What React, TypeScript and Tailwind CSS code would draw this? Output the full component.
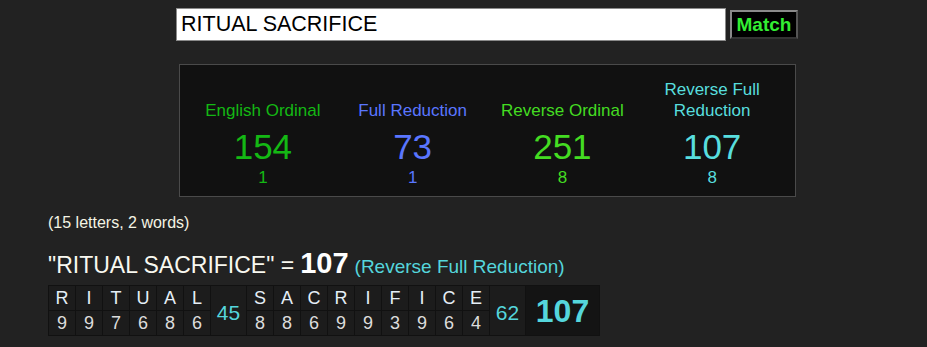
import React from 'react';

type Cipher = { name: React.ReactNode; value: number; reduced: number; color: string };

const CIPHERS: Cipher[] = [
  { name: 'English Ordinal', value: 154, reduced: 1, color: 'text-[#14b814]' },
  { name: 'Full Reduction', value: 73, reduced: 1, color: 'text-[#5a76ff]' },
  { name: 'Reverse Ordinal', value: 251, reduced: 8, color: 'text-[#44dc22]' },
  { name: <>Reverse Full<br />Reduction</>, value: 107, reduced: 8, color: 'text-[#58dede]' },
];

const WORDS = [
  { letters: 'RITUAL', values: [9, 9, 7, 6, 8, 6], total: 45 },
  { letters: 'SACRIFICE', values: [8, 8, 6, 9, 9, 3, 9, 6, 4], total: 62 },
];

const App: React.FC = () => {
  return (
    <div className="min-h-screen bg-[#222222] font-['Liberation_Sans',Arial,sans-serif] pb-4">
      {/* Search bar */}
      <div className="pt-2 pl-[176px] flex items-center gap-1">
        <input
          readOnly
          value="RITUAL SACRIFICE"
          className="w-[550px] h-[33px] bg-white border border-[#8a8a8a] px-1 text-[21.5px] text-black outline-none"
        />
        <button className="h-[29px] w-[68px] bg-black text-[#33ee33] font-bold text-[19px] border-2 border-t-[#8a8a8a] border-l-[#8a8a8a] border-r-[#555] border-b-[#333] leading-none">
          Match
        </button>
      </div>

      {/* Cipher summary */}
      <div className="mt-[23px] ml-[179px] w-[617px] bg-[#111111] border border-[#4a4a4a] pt-[14px] pb-[9px] px-2 grid grid-cols-4">
        {CIPHERS.map((c, i) => (
          <div key={i} className={`flex flex-col items-center ${c.color}`}>
            <div className="h-[42px] flex items-end justify-center text-center text-[17px] leading-[21px]">
              {c.name}
            </div>
            <div className="mt-[6px] text-[35px] leading-[40px]">{c.value}</div>
            <div className="mt-[2px] text-[17px] leading-[18px]">{c.reduced}</div>
          </div>
        ))}
      </div>

      {/* Breakdown */}
      <div className="pl-[48px]">
        <div className="mt-[17px] text-[16px] leading-[18px] text-[#f4f4e4]">(15 letters, 2 words)</div>
        <div className="mt-[16px] flex items-baseline gap-[6px] leading-[30px]">
          <span className="text-[23px] text-[#f8f8f0]">"RITUAL SACRIFICE" =</span>
          <span className="text-[29px] font-bold text-white">107</span>
          <span className="text-[19px] text-[#55d6dc]">(Reverse Full Reduction)</span>
        </div>

        <table className="mt-[3px] bg-[#111111] border-separate border-spacing-[1px]">
          <tbody>
            <tr className="h-[24px]">
              {WORDS.map((w, wi) => (
                <React.Fragment key={wi}>
                  {w.letters.split('').map((l, li) => (
                    <td key={li} className="w-[26px] bg-[#1c1c1c] text-center text-[18px] leading-[20px] text-[#e4eef6] p-0">
                      {l}
                    </td>
                  ))}
                  <td rowSpan={2} className="w-[35px] bg-[#1c1c1c] text-center align-middle text-[21px] text-[#55d6dc] p-0 pt-[4px]">
                    {w.total}
                  </td>
                </React.Fragment>
              ))}
              <td rowSpan={2} className="w-[73px] bg-[#141414] text-center align-middle text-[32px] font-bold text-[#55d6dc] p-0">
                107
              </td>
            </tr>
            <tr className="h-[24px]">
              {WORDS.map((w) =>
                w.values.map((v, vi) => (
                  <td key={w.letters + vi} className="w-[26px] bg-[#1c1c1c] text-center text-[18px] leading-[20px] text-[#dcdcdc] p-0">
                    {v}
                  </td>
                ))
              )}
            </tr>
          </tbody>
        </table>
      </div>
    </div>
  );
};

export default App;
